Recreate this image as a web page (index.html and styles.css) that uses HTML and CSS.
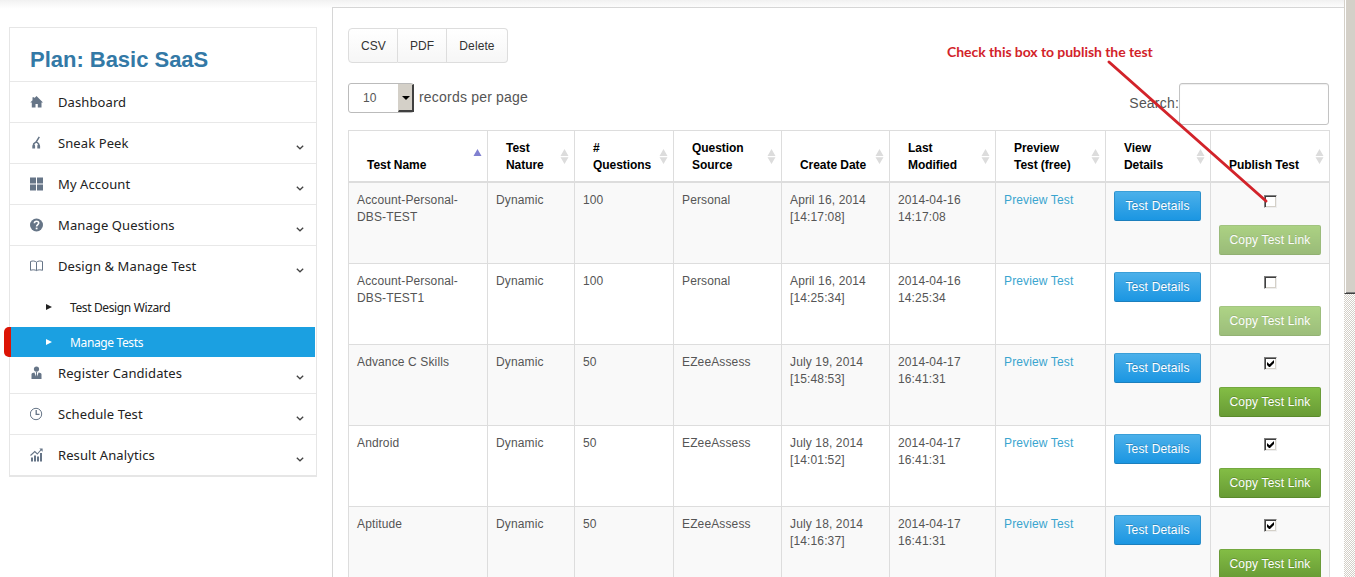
FILE: index.html
```html
<!DOCTYPE html>
<html lang="en">
<head>
<meta charset="utf-8">
<title>Manage Tests</title>
<link rel="stylesheet" href="styles.css">
</head>
<body>
<svg width="0" height="0" class="defs">
  <symbol id="chev" viewBox="0 0 8 5"><path d="M.8 .8L4 3.8L7.2 .8" fill="none" stroke="#444" stroke-width="1.3"/></symbol>
  <symbol id="sort" viewBox="0 0 9 15"><path d="M4.5 0L8.5 7H.5zM.5 8.2H8.5L4.5 15z" fill="#dcdcdc"/></symbol>
  <symbol id="tick" viewBox="0 0 13 13"><path d="M3 5v3l2 2h1l4-4V3L5.500 7.300z" fill="#000"/></symbol>
</svg>
<div class="page">
  <aside class="sidebar">
    <h2 class="plan">Plan: Basic SaaS</h2>
    <a class="item"><svg class="ico" viewBox="0 0 14 14"><path d="M6.500 1L13 7.400H11.500V12.500H7.800V9H5.500V12.500H1.800V7.400H.3L2.500 5.200V2.300H4.300V3.300z"/></svg><span>Dashboard</span></a>
    <a class="item"><svg class="ico" viewBox="0 0 14 14"><path d="M9.300 .8L6.500 5.500L3.700 7.800V9.500M6.300 5.500L8.700 8V9.500" class="ln" stroke-width="1.500"/><path d="M2.300 12.600V10a1.400 1.400 0 0 1 2.800 0v2.600zM7.300 12.600V10a1.400 1.400 0 0 1 2.800 0v2.600z"/></svg><span>Sneak Peek</span><svg class="chev"><use href="#chev"/></svg></a>
    <a class="item"><svg class="ico" viewBox="0 0 14 14"><path d="M0 .5h6v6H0zM7 .5h6v6H7zM0 7.500h6v6H0zM7 7.500h6v6H7z"/></svg><span>My Account</span><svg class="chev"><use href="#chev"/></svg></a>
    <a class="item"><svg class="ico" viewBox="0 0 14 14"><circle cx="6.500" cy="7" r="6.500"/><path d="M4.400 5.300C4.400 2.500 8.700 2.600 8.700 5.100C8.700 6.700 6.600 6.700 6.600 8.600" fill="none" stroke="#fff" stroke-width="1.600"/><path d="M5.700 9.600h1.800v1.700H5.700z" fill="#fff"/></svg><span>Manage Questions</span><svg class="chev"><use href="#chev"/></svg></a>
    <a class="item open"><svg class="ico" viewBox="0 0 14 14"><path d="M6.500 3.200C5 1.800 2.500 1.700 .5 2.500V11.300C2.500 10.600 5 10.700 6.500 11.600C8 10.700 10.500 10.600 12.500 11.300V2.500C10.500 1.700 8 1.800 6.500 3.200V11.600" class="ln" stroke-width="1"/></svg><span>Design &amp; Manage Test</span><svg class="chev"><use href="#chev"/></svg></a>
    <a class="sub"><svg class="arrow" viewBox="0 0 6 6"><path d="M0 0L6 3L0 6z"/></svg><span>Test Design Wizard</span></a>
    <a class="sub active"><svg class="arrow" viewBox="0 0 6 6"><path d="M0 0L6 3L0 6z"/></svg><span>Manage Tests</span></a>
    <a class="item after"><svg class="ico" viewBox="0 0 14 14"><circle cx="6.500" cy="3" r="2.600"/><path d="M1.500 13V8.300C1.500 7.200 3.200 6.800 4.500 6.500L5.700 10.500L6.100 7L5.700 5.500H7.300L6.900 7L7.300 10.500L8.500 6.500C9.800 6.800 11.500 7.200 11.500 8.300V13z"/></svg><span>Register Candidates</span><svg class="chev"><use href="#chev"/></svg></a>
    <a class="item"><svg class="ico" viewBox="0 0 14 14"><circle cx="6" cy="7" r="5.700" class="ln" stroke-width="1"/><path d="M6.200 3V7.400H9.500" class="ln" stroke-width="1.300"/></svg><span>Schedule Test</span><svg class="chev"><use href="#chev"/></svg></a>
    <a class="item"><svg class="ico" viewBox="0 0 14 14"><path d="M1 9.500h2V13.500H1zM4 7.500h2v6H4zM7 8.500h2v5H7zM10 5h2v8.500h-2z"/><path d="M.5 7.500L4.800 3.600L7.300 6L11.300 1.500" class="ln" stroke-width="1.100"/><path d="M9.300 .4h3.300v3.300z"/></svg><span>Result Analytics</span><svg class="chev"><use href="#chev"/></svg></a>
  </aside>

  <main class="panel">
    <div class="export"><button>CSV</button><button>PDF</button><button>Delete</button></div>
    <div class="filters">
      <label class="length"><span class="select"><span class="value">10</span><span class="drop"><svg viewBox="0 0 8 4"><path d="M0 0H8L4 4z"/></svg></span></span><span class="caption">records per page</span></label>
      <label class="search"><span class="caption">Search:</span><input type="text"></label>
    </div>
    <table class="tests">
      <colgroup><col class="c1"><col class="c2"><col class="c3"><col class="c4"><col class="c5"><col class="c6"><col class="c7"><col class="c8"><col class="c9"></colgroup>
      <thead><tr>
        <th>Test Name<svg class="sort" viewBox="0 0 9 15"><path d="M4.500 0L8.500 7H.5z" fill="#8080d0"/></svg></th>
        <th>Test<br>Nature<svg class="sort"><use href="#sort"/></svg></th>
        <th>#<br>Questions<svg class="sort"><use href="#sort"/></svg></th>
        <th>Question<br>Source<svg class="sort"><use href="#sort"/></svg></th>
        <th>Create Date<svg class="sort"><use href="#sort"/></svg></th>
        <th>Last<br>Modified<svg class="sort"><use href="#sort"/></svg></th>
        <th>Preview<br>Test (free)<svg class="sort"><use href="#sort"/></svg></th>
        <th>View<br>Details<svg class="sort"><use href="#sort"/></svg></th>
        <th>Publish Test<svg class="sort"><use href="#sort"/></svg></th>
      </tr></thead>
      <tbody>
        <tr><td>Account-Personal-<br>DBS-TEST</td><td>Dynamic</td><td>100</td><td>Personal</td><td>April 16, 2014<br>[14:17:08]</td><td>2014-04-16<br>14:17:08</td><td><a>Preview Test</a></td><td class="act"><button class="btn blue">Test Details</button></td><td class="act"><span class="box"></span><button class="btn green off">Copy Test Link</button></td></tr>
        <tr><td>Account-Personal-<br>DBS-TEST1</td><td>Dynamic</td><td>100</td><td>Personal</td><td>April 16, 2014<br>[14:25:34]</td><td>2014-04-16<br>14:25:34</td><td><a>Preview Test</a></td><td class="act"><button class="btn blue">Test Details</button></td><td class="act"><span class="box"></span><button class="btn green off">Copy Test Link</button></td></tr>
        <tr><td>Advance C Skills</td><td>Dynamic</td><td>50</td><td>EZeeAssess</td><td>July 19, 2014<br>[15:48:53]</td><td>2014-04-17<br>16:41:31</td><td><a>Preview Test</a></td><td class="act"><button class="btn blue">Test Details</button></td><td class="act"><span class="box"><svg><use href="#tick"/></svg></span><button class="btn green">Copy Test Link</button></td></tr>
        <tr><td>Android</td><td>Dynamic</td><td>50</td><td>EZeeAssess</td><td>July 18, 2014<br>[14:01:52]</td><td>2014-04-17<br>16:41:31</td><td><a>Preview Test</a></td><td class="act"><button class="btn blue">Test Details</button></td><td class="act"><span class="box"><svg><use href="#tick"/></svg></span><button class="btn green">Copy Test Link</button></td></tr>
        <tr><td>Aptitude</td><td>Dynamic</td><td>50</td><td>EZeeAssess</td><td>July 18, 2014<br>[14:16:37]</td><td>2014-04-17<br>16:41:31</td><td><a>Preview Test</a></td><td class="act"><button class="btn blue">Test Details</button></td><td class="act"><span class="box"><svg><use href="#tick"/></svg></span><button class="btn green">Copy Test Link</button></td></tr>
      </tbody>
    </table>
  </main>

  <div class="scrollbar"><div class="thumb"></div></div>

  <div class="note">Check this box to publish the test</div>
  <svg class="pointer" viewBox="0 0 164 146"><path d="M3 3L160 142" stroke="#d2232a" stroke-width="3" stroke-linecap="round"/></svg>
</div>
</body>
</html>
```
FILE: styles.css
```css
* { box-sizing: border-box; }
body { margin: 0; background: #fff; font-family: "Liberation Sans", Arial, sans-serif; color: #555; }
.defs { position: absolute; }
.page {
  position: relative;
  display: flex;
  align-items: flex-start;
  width: 1355px;
  height: 577px;
  overflow: hidden;
  background: linear-gradient(#f1f1f1, #f8f8f8 4px, #fff 9px);
}

/* Sidebar */
.sidebar {
  width: 308px;
  margin: 27px 15px 0 9px;
  border: 1px solid #e6e6e6;
  border-bottom-width: 2px;
  background: #fff;
  font-family: "Noto Sans", sans-serif;
  color: #222;
  flex: none;
}
.plan {
  margin: 0;
  height: 54px;
  padding: 10px 0 0 20px;
  border-bottom: 1px solid #e8e8e8;
  font: bold 22px/43px "Liberation Sans", Arial, sans-serif;
  color: #3379a6;
  letter-spacing: -.02px;
}
.item {
  display: flex;
  align-items: center;
  height: 41px;
  padding: 0 12px 0 20px;
  border-bottom: 1px solid #e8e8e8;
  font-size: 13px;
  letter-spacing: .1px;
}
.item:last-child { border-bottom: 0; height: 40px; }
.item.open { border-bottom-color: #fff; }
.item.after { height: 37px; padding-bottom: 4px; }
.ico { width: 14px; height: 14px; margin-right: 14px; fill: #667587; flex: none; }
.ln { fill: none; stroke: #667587; }
.chev { width: 8px; height: 5px; margin: 9px 0 0 auto; }
.sub {
  display: flex;
  align-items: center;
  height: 40px;
  padding-left: 36px;
  font-size: 12px;
  letter-spacing: -.37px;
}
.sub.active {
  height: 30px;
  margin: 0 1px 0 -6px;
  padding-left: 35px;
  border-left: 7px solid #dc1405;
  border-radius: 5px 0 0 5px;
  background: #1ba0e1;
  color: #fff;
}
.arrow { width: 6px; height: 6px; margin-right: 18px; fill: currentColor; }

/* Main panel */
.panel {
  flex: none;
  width: 1013px;
  height: 620px;
  margin-top: 7px;
  padding: 20px 15px 0 15px;
  border: 1px solid #d6d6d6;
  background: #fff;
}
.export { display: flex; }
.export button {
  height: 35px;
  padding: 0 12px;
  border: 1px solid #ddd;
  border-left-width: 0;
  background: linear-gradient(#fff, #f6f6f6);
  font: 12px "Liberation Sans", Arial, sans-serif;
  color: #333;
  letter-spacing: .1px;
}
.export button:first-child { width: 50px; border-left-width: 1px; border-radius: 4px 0 0 4px; }
.export button:nth-child(2) { width: 49px; }
.export button:last-child { width: 61px; border-radius: 0 4px 4px 0; }
.filters {
  display: flex;
  justify-content: space-between;
  align-items: flex-start;
  height: 47px;
  margin-top: 20px;
  font-size: 14px;
}
.length { display: flex; align-items: center; gap: 5px; letter-spacing: .2px; }
.caption { padding-bottom: 2px; }
.select {
  display: flex;
  justify-content: space-between;
  width: 66px;
  height: 30px;
  border: 1px solid #bbb;
  border-radius: 3px;
  background: #fff;
  font-size: 12px;
}
.value { padding-left: 14px; line-height: 28px; }
.drop {
  display: flex;
  align-items: center;
  justify-content: center;
  width: 16px;
  margin-right: -1px;
  border: 1px solid #d4d0c8;
  border-right: 2px solid #404040;
  border-bottom: 2px solid #404040;
  background: #d4d0c8;
}
.drop svg { width: 8px; height: 4px; flex: none; }
.search { display: flex; align-items: center; letter-spacing: .2px; }
.search input {
  width: 150px;
  height: 42px;
  border: 1px solid #c3c3c3;
  border-radius: 3px;
  background: #fff;
  box-shadow: inset 0 1px 1px rgba(0, 0, 0, .07);
}

/* Test table */
.tests {
  width: 982px;
  table-layout: fixed;
  border-collapse: separate;
  border-spacing: 0;
  border-left: 1px solid #ddd;
  border-top: 1px solid #ddd;
  font-size: 12px;
  line-height: 17px;
  letter-spacing: .13px;
}
.c1 { width: 139px; }
.c2 { width: 87px; }
.c3 { width: 99px; }
.c4, .c5 { width: 108px; }
.c6 { width: 106px; }
.c7 { width: 110px; }
.c8 { width: 105px; }
.c9 { width: 119px; }
th {
  position: relative;
  height: 52px;
  padding: 9px 0 7px 18px;
  border-right: 1px solid #ddd;
  border-bottom: 2px solid #ddd;
  text-align: left;
  vertical-align: bottom;
  white-space: nowrap;
  color: #000;
  letter-spacing: -.05px;
}
.sort { position: absolute; right: 5px; top: 18px; width: 9px; height: 15px; }
td {
  height: 81px;
  padding: 9px 0 0 8px;
  border-right: 1px solid #ddd;
  border-bottom: 1px solid #ddd;
  vertical-align: top;
  white-space: nowrap;
}
td.act { padding-top: 8px; }
tbody tr:nth-child(odd) { background: #f9f9f9; }
td a { color: #3aa5cf; }
.btn {
  display: block;
  height: 30px;
  padding: 0;
  border: 1px solid;
  border-radius: 2px;
  font: 12px "Liberation Sans", Arial, sans-serif;
  color: #fff;
  letter-spacing: .18px;
  text-shadow: 0 -1px 0 rgba(0, 0, 0, .2);
}
.blue { width: 87px; background: linear-gradient(#4bb0ea, #1b96e2); border-color: #3a9fd8 #2b8fcb #1c7fbd; }
.green { width: 102px; background: linear-gradient(#83bd45, #689b35); border-color: #74a840 #6a9b38 #5a8a2b; }
.green.off { opacity: .65; }
.box {
  display: block;
  width: 13px;
  height: 13px;
  margin: 4px 0 17px 45px;
  border: 1px solid;
  border-color: #808080 #eee #eee #808080;
  box-shadow: inset 1px 1px #404040, inset -1px -1px #d4d0c8;
  background: #fff;
}
.box svg { display: block; width: 13px; height: 13px; margin: -1px; }

/* Window scrollbar */
.scrollbar {
  width: 11px;
  height: 577px;
  margin-left: -1px;
  background: repeating-conic-gradient(#d4d0c8 0 25%, #fff 0 50%) 0 0 / 2px 2px;
  flex: none;
}
.thumb {
  height: 294px;
  border-left: 1px solid #d4d0c8;
  border-bottom: 1px solid #404040;
  background: #d4d0c8;
  box-shadow: inset 1px 0 #fff, inset 0 -1px #808080;
}

/* Annotation lying over the page */
.note {
  position: absolute;
  left: 947px;
  top: 43px;
  font: bold 14px/17px Lato, sans-serif;
  color: #d2232a;
  letter-spacing: -.06px;
  white-space: nowrap;
}
.pointer { position: absolute; left: 1106px; top: 59px; width: 164px; height: 146px; }
```
